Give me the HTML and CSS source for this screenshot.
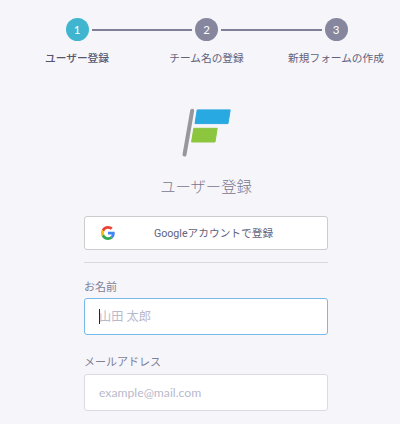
FILE: index.html
```
<!DOCTYPE html>
<html lang="ja">
  <head>
    <meta charset="UTF-8" />
    <meta name="viewport" content="width=device-width, initial-scale=1.0" />
    <title>ユーザー登録</title>

    <link rel="stylesheet" href="styles.css">
  </head>
  <body>
    <ol class="steps">
      <li class="step step--active">
        <div class="step__marker"><span class="step__number">1</span></div>
        <span class="step__label">ユーザー登録</span>
      </li>
      <li class="step">
        <div class="step__marker"><span class="step__number">2</span></div>
        <span class="step__label">チーム名の登録</span>
      </li>
      <li class="step">
        <div class="step__marker"><span class="step__number">3</span></div>
        <span class="step__label">新規フォームの作成</span>
      </li>
    </ol>

    <main class="signup">
      <svg class="signup__logo" width="50" height="50" viewBox="0 0 50 50" aria-hidden="true">
        <path d="M11.200 3.700 3.500 47.600" stroke="#97979c" stroke-width="4" stroke-linecap="round" />
        <path d="M16.200 2.900H49.200L47 16.600H14Z" fill="#29a9e1" stroke="#29a9e1" stroke-linejoin="round" />
        <path d="M12.800 21.300H36.200L34 35H10.600Z" fill="#8cc63f" stroke="#8cc63f" stroke-linejoin="round" />
      </svg>

      <h1 class="signup__title">ユーザー登録</h1>

      <button class="google-button" type="button">
        <svg class="google-button__icon" width="14" height="14" viewBox="0 0 48 48" aria-hidden="true">
          <path fill="#ea4335" d="M24 9.500c3.500 0 6.700 1.200 9.200 3.600l6.900-6.900C35.900 2.400 30.500 0 24 0 14.600 0 6.500 5.400 2.600 13.200l8 6.200C12.400 13.700 17.700 9.500 24 9.500z" />
          <path fill="#4285f4" d="M47 24.600c0-1.600-.2-3.100-.4-4.600H24v9h12.900c-.6 3-2.300 5.500-4.800 7.200l7.700 6C44.400 38 47 31.800 47 24.600z" />
          <path fill="#fbbc05" d="M10.500 28.600A14.500 14.500 0 0 1 10.500 19.400l-8-6.200a24 24 0 0 0 0 21.600z" />
          <path fill="#34a853" d="M24 48c6.500 0 11.900-2.100 15.900-5.800l-7.700-6C30 37.700 27.200 38.500 24 38.500c-6.300 0-11.600-4.200-13.500-9.900l-8 6.200C6.500 42.600 14.600 48 24 48z" />
        </svg>
        <span class="google-button__text">Googleアカウントで登録</span>
      </button>

      <hr class="divider" />

      <form class="signup__form">
        <div class="field">
          <label for="name-input">お名前</label>
          <div class="field__box field__box--focus">
            <span class="field__caret"></span>
            <input id="name-input" class="field__input" type="text" placeholder="山田 太郎" />
          </div>
        </div>

        <div class="field">
          <label for="email-input">メールアドレス</label>
          <div class="field__box">
            <input id="email-input" class="field__input" type="email" placeholder="example@mail.com" />
          </div>
        </div>
      </form>
    </main>
  </body>
</html>
```

FILE: styles.css
```
* {
  box-sizing: border-box;
}

body {
  margin: 0;
  height: 424px;
  overflow: hidden;
  font-family: Lato, 'Noto Sans CJK JP', sans-serif;
  font-size: 11px;
  color: #7f7f96;
  background-color: #f5f5fa;
}

.steps {
  display: grid;
  grid-template-columns: repeat(3, 129.5px);
  justify-content: center;
  margin: 0;
  padding: 18px 0 0 13px;
  width: 400px;
  list-style: none;
}

.step__marker {
  display: flex;
  align-items: center;
  gap: 3px;
}

.step__marker::before,
.step__marker::after {
  content: '';
  flex: 1;
  height: 2px;
  background: #7f7f96;
}

.step:first-child .step__marker::before,
.step:last-child .step__marker::after {
  background: none;
}

.step__number {
  width: 23px;
  height: 23px;
  border-radius: 50%;
  font-size: 11.5px;
  line-height: 23px;
  text-align: center;
  color: #fff;
  background: #86869e;
}

.step__label {
  display: block;
  margin-top: 9px;
  font-size: 10.7px;
  line-height: 16px;
  text-align: center;
  white-space: nowrap;
  color: #62627c;
}

.step--active .step__number {
  background: #3fb5d0;
}

.step--active .step__label {
  font-weight: 500;
  color: #555570;
}

.signup {
  width: 244px;
  margin: 41px 0 0 84px;
}

.signup__logo {
  display: block;
  margin: 0 auto;
  fill: none;
}

.signup__title {
  margin: 18px 0 19px;
  font-size: 15.3px;
  font-weight: 300;
  line-height: 22px;
  text-align: center;
  color: #77778f;
}

.google-button {
  display: flex;
  align-items: center;
  width: 100%;
  height: 34px;
  padding: 0 15px 0 16px;
  border: 1px solid #ccccd0;
  border-radius: 3px;
  font-family: Roboto, 'Noto Sans CJK JP', sans-serif;
  font-size: 10.7px;
  color: #62627c;
  background: #fff;
}

.google-button__text {
  flex: 1;
  padding-bottom: 2px;
  text-align: center;
}

.divider {
  margin: 12px 0 16px;
  border: 0;
  border-top: 1px solid #d9d9de;
}

.field {
  margin-bottom: 18.8px;
}

.field label {
  display: block;
  margin-bottom: 3.4px;
  line-height: 16px;
}

.field__box {
  display: flex;
  align-items: center;
  height: 37px;
  padding: 0 14px;
  border: 1px solid #dadae5;
  border-radius: 3px;
  background: #fff;
}

.field__box--focus {
  border-color: #77b9e8;
}

.field__caret {
  width: 1px;
  height: 15px;
  margin-right: -1px;
  background: #222233;
}

.field__input {
  flex: 1;
  min-width: 0;
  padding: 0;
  border: 0;
  outline: 0;
  font-family: Lato, 'Noto Sans CJK JP', sans-serif;
  font-size: 12.2px;
  background: none;
}

.field__input::placeholder {
  color: #b9b9cc;
}
```
